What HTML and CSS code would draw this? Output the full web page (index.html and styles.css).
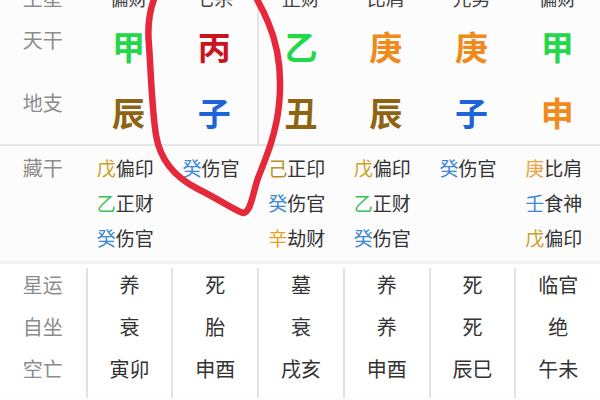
FILE: index.html
```html
<!DOCTYPE html>
<html lang="zh">
<head>
<meta charset="utf-8">
<link rel="stylesheet" href="styles.css">
</head>
<body>
<div class="page">
  <section class="pillars">
    <div class="row row-main">
      <div class="lbl">主星</div>
      <div class="cell">偏财</div>
      <div class="cell">七杀</div>
      <div class="cell sep">正财</div>
      <div class="cell">比肩</div>
      <div class="cell">元男</div>
      <div class="cell">偏财</div>
    </div>
    <div class="row row-stem">
      <div class="lbl">天干</div>
      <div class="cell big c-green">甲</div>
      <div class="cell big c-red">丙</div>
      <div class="cell big c-green sep">乙</div>
      <div class="cell big c-orange">庚</div>
      <div class="cell big c-orange">庚</div>
      <div class="cell big c-green">甲</div>
    </div>
    <div class="row row-branch">
      <div class="lbl">地支</div>
      <div class="cell big c-brown">辰</div>
      <div class="cell big c-blue">子</div>
      <div class="cell big c-brown sep">丑</div>
      <div class="cell big c-brown">辰</div>
      <div class="cell big c-blue">子</div>
      <div class="cell big c-orange">申</div>
    </div>
  </section>

  <section class="hidden">
    <div class="lbl">藏干</div>
    <div class="hcol">
      <div class="hl"><span class="s-wu">戊</span>偏印</div>
      <div class="hl"><span class="s-yi">乙</span>正财</div>
      <div class="hl"><span class="s-gui">癸</span>伤官</div>
    </div>
    <div class="hcol">
      <div class="hl"><span class="s-gui">癸</span>伤官</div>
    </div>
    <div class="hcol">
      <div class="hl"><span class="s-ji">己</span>正印</div>
      <div class="hl"><span class="s-gui">癸</span>伤官</div>
      <div class="hl"><span class="s-xin">辛</span>劫财</div>
    </div>
    <div class="hcol">
      <div class="hl"><span class="s-wu">戊</span>偏印</div>
      <div class="hl"><span class="s-yi">乙</span>正财</div>
      <div class="hl"><span class="s-gui">癸</span>伤官</div>
    </div>
    <div class="hcol">
      <div class="hl"><span class="s-gui">癸</span>伤官</div>
    </div>
    <div class="hcol">
      <div class="hl"><span class="s-geng">庚</span>比肩</div>
      <div class="hl"><span class="s-ren">壬</span>食神</div>
      <div class="hl"><span class="s-wu">戊</span>偏印</div>
    </div>
  </section>

  <section class="bottom">
    <div class="bcol blabels">
      <div class="bl">星运</div>
      <div class="bl">自坐</div>
      <div class="bl">空亡</div>
    </div>
    <div class="bcol"><div class="bl">养</div><div class="bl">衰</div><div class="bl">寅卯</div></div>
    <div class="bcol"><div class="bl">死</div><div class="bl">胎</div><div class="bl">申酉</div></div>
    <div class="bcol"><div class="bl">墓</div><div class="bl">衰</div><div class="bl">戌亥</div></div>
    <div class="bcol"><div class="bl">养</div><div class="bl">养</div><div class="bl">申酉</div></div>
    <div class="bcol"><div class="bl">死</div><div class="bl">死</div><div class="bl">辰巳</div></div>
    <div class="bcol"><div class="bl">临官</div><div class="bl">绝</div><div class="bl">午未</div></div>
  </section>

  <svg class="mark" width="600" height="400" viewBox="0 0 600 400">
    <path d="M156,-6 C150,8 147,25 149,45 C151,75 152,110 156,135 C160,160 174,177 198,189 C220,200 234,210 243,213 C251,212 252,196 258,178 C265,160 276,135 279,105 C282,75 278,45 268,22 C263,10 258,1 254,-6" fill="none" stroke="#e5283a" stroke-width="6.5" stroke-linecap="round" stroke-linejoin="round"/>
  </svg>
</div>
</body>
</html>
```

FILE: styles.css
```css
* { box-sizing: border-box; }
html, body { margin: 0; padding: 0; }
body {
  width: 600px;
  height: 400px;
  overflow: hidden;
  background: #fcfcfd;
  font-family: "Noto Sans CJK SC", "Noto Sans", sans-serif;
}
.page {
  position: relative;
  width: 600px;
  height: 400px;
  overflow: hidden;
}
.row {
  display: grid;
  grid-template-columns: repeat(7, 1fr);
}
.lbl {
  text-align: center;
  color: #8c8c8c;
  font-size: 20px;
  line-height: 20px;
}
.cell {
  text-align: center;
}
.sep {
  border-left: 2px solid #e4e4e6;
}
.row-main {
  height: 24px;
  margin-top: -14px;
  align-items: center;
  font-size: 19px;
  color: #444;
}
.row-main .cell { line-height: 24px; height: 24px; }
.row-stem { height: 72px; }
.row-stem .lbl { padding-top: 20px; }
.row-branch { height: 62px; }
.row-branch .lbl { padding-top: 11px; }
.big {
  font-size: 33px;
  font-weight: 700;
  display: flex;
  align-items: center;
  justify-content: center;
}
.row-branch .big { padding-bottom: 2px; }
.c-green { color: #22d848; }
.c-red { color: #c8141e; }
.c-blue { color: #1c64d8; }
.c-brown { color: #8c6414; }
.c-orange { color: #f08a1a; }

.hidden {
  display: grid;
  grid-template-columns: repeat(7, 1fr);
  border-top: 2px solid #e6e6e8;
  padding-top: 4px;
  padding-bottom: 8px;
  border-bottom: 3px solid #f1f1f3;
  height: 120px;
}
.hidden .lbl { line-height: 35px; }
.hcol { padding-left: 11px; }
.hl {
  font-size: 19px;
  line-height: 35px;
  height: 35px;
  color: #333;
  white-space: nowrap;
}
.s-wu { color: #c9a324; }
.s-yi { color: #3cc05c; }
.s-gui { color: #3d88d6; }
.s-ji { color: #b88e28; }
.s-xin { color: #e4a020; }
.s-geng { color: #f0a040; }
.s-ren { color: #3d88d6; }

.bottom {
  display: grid;
  grid-template-columns: repeat(7, 1fr);
  background: #fff;
  height: 134px;
}
.bcol {
  border-left: 2px solid #e2e2e4;
  margin-top: 4px;
  padding-top: 0;
}
.bcol .bl:first-child { margin-top: -4px; }
.blabels { border-left: none; }
.bl {
  height: 42px;
  line-height: 42px;
  text-align: center;
  font-size: 20px;
  color: #333;
}
.blabels .bl { color: #8c8c8c; }
.mark {
  position: absolute;
  left: 0;
  top: 0;
  pointer-events: none;
}
```
